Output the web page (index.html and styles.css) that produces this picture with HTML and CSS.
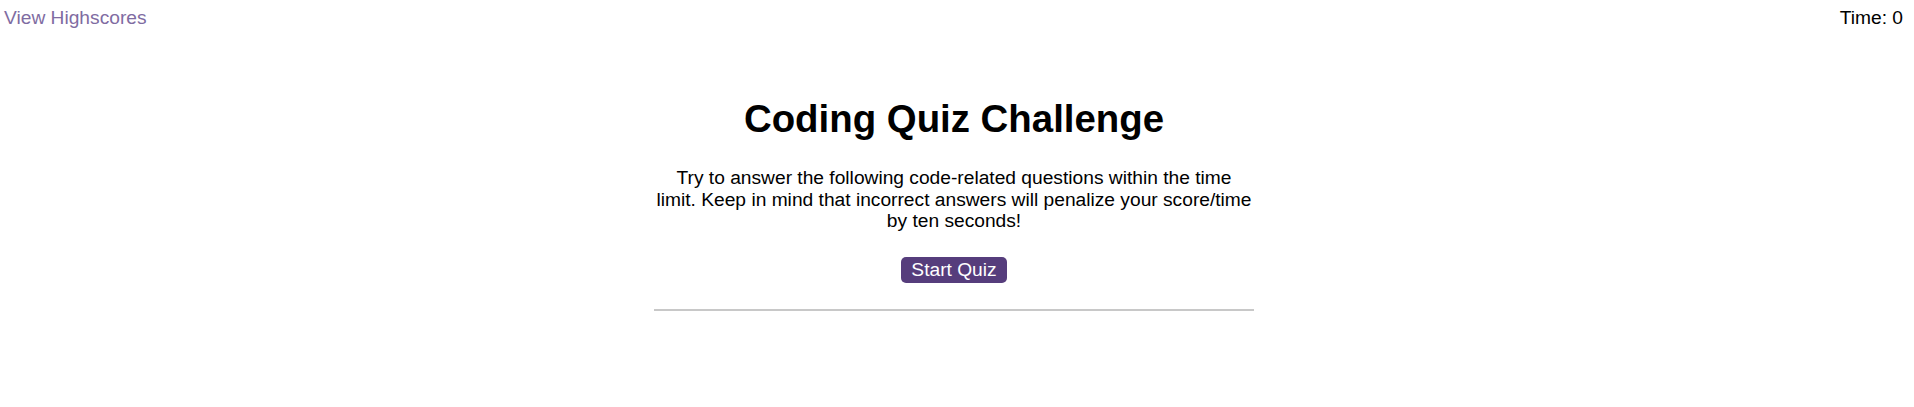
FILE: index.html
```html
<!DOCTYPE html>
<html lang="en">
<head>
<meta charset="utf-8">
<title>Coding Quiz Challenge</title>
<link rel="stylesheet" href="styles.css">
</head>
<body>
<header class="top-bar">
  <a class="highscores-link" href="#">View Highscores</a>
  <div class="timer">Time: <span class="timer-value">0</span></div>
</header>
<main class="quiz">
  <h1 class="quiz-title">Coding Quiz Challenge</h1>
  <p class="quiz-intro">Try to answer the following code-related questions within the time limit. Keep in mind that incorrect answers will penalize your score/time by ten seconds!</p>
  <button class="start-btn" type="button">Start Quiz</button>
  <hr class="divider">
</main>
</body>
</html>
```
FILE: styles.css
```css
html, body {
  margin: 0;
  background: #ffffff;
}

body {
  padding-right: 6px;
  font-family: "Liberation Sans", Arial, sans-serif;
  color: #000000;
}

.top-bar {
  display: flex;
  justify-content: space-between;
  align-items: flex-start;
  padding: 7px 5px 0 4px;
  font-size: 19.2px;
  line-height: 22px;
}

.highscores-link {
  color: #7f6ca2;
  text-decoration: none;
}

.quiz {
  width: 600px;
  margin: 68px auto 0;
  text-align: center;
}

.quiz-title {
  margin: 0;
  font-size: 38.4px;
  line-height: 44px;
  font-weight: bold;
}

.quiz-intro {
  margin: 26px 0 0;
  padding: 0 1.5px;
  font-size: 19.2px;
  line-height: 21.5px;
}

.start-btn {
  margin-top: 25px;
  padding: 2px 10px 3px;
  border: 0;
  border-radius: 5px;
  background: #563d7c;
  color: #ffffff;
  font-family: inherit;
  font-size: 19.2px;
  line-height: 21px;
}

.divider {
  margin: 26px 0 0;
  border: 0;
  border-top: 2px solid #c8c8c8;
  height: 0;
}
```
